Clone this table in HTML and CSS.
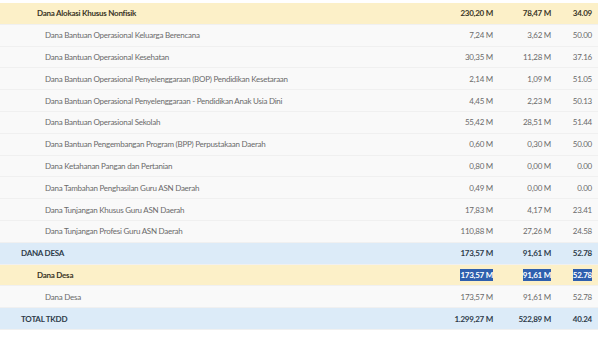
FILE: index.html
```html
<!DOCTYPE html>
<html lang="en">
<head>
    <meta charset="UTF-8">
    <title>Realisasi TKDD</title>
    <link rel="stylesheet" href="styles.css">
</head>
<body>
    <!-- TKDD realisation table -->
    <div class="tkdd-table">
        <div class="row sub-group">
            <div class="cell label lvl-2">Dana Alokasi Khusus Nonfisik</div>
            <div class="cell num">230,20 M</div>
            <div class="cell num">78,47 M</div>
            <div class="cell num">34.09</div>
        </div>
        <div class="row">
            <div class="cell label lvl-3">Dana Bantuan Operasional Keluarga Berencana</div>
            <div class="cell num">7,24 M</div>
            <div class="cell num">3,62 M</div>
            <div class="cell num">50.00</div>
        </div>
        <div class="row">
            <div class="cell label lvl-3">Dana Bantuan Operasional Kesehatan</div>
            <div class="cell num">30,35 M</div>
            <div class="cell num">11,28 M</div>
            <div class="cell num">37.16</div>
        </div>
        <div class="row">
            <div class="cell label lvl-3">Dana Bantuan Operasional Penyelenggaraan (BOP) Pendidikan Kesetaraan</div>
            <div class="cell num">2,14 M</div>
            <div class="cell num">1,09 M</div>
            <div class="cell num">51.05</div>
        </div>
        <div class="row">
            <div class="cell label lvl-3">Dana Bantuan Operasional Penyelenggaraan - Pendidikan Anak Usia Dini</div>
            <div class="cell num">4,45 M</div>
            <div class="cell num">2,23 M</div>
            <div class="cell num">50.13</div>
        </div>
        <div class="row">
            <div class="cell label lvl-3">Dana Bantuan Operasional Sekolah</div>
            <div class="cell num">55,42 M</div>
            <div class="cell num">28,51 M</div>
            <div class="cell num">51.44</div>
        </div>
        <div class="row">
            <div class="cell label lvl-3">Dana Bantuan Pengembangan Program (BPP) Perpustakaan Daerah</div>
            <div class="cell num">0,60 M</div>
            <div class="cell num">0,30 M</div>
            <div class="cell num">50.00</div>
        </div>
        <div class="row">
            <div class="cell label lvl-3">Dana Ketahanan Pangan dan Pertanian</div>
            <div class="cell num">0,80 M</div>
            <div class="cell num">0,00 M</div>
            <div class="cell num">0.00</div>
        </div>
        <div class="row">
            <div class="cell label lvl-3">Dana Tambahan Penghasilan Guru ASN Daerah</div>
            <div class="cell num">0,49 M</div>
            <div class="cell num">0,00 M</div>
            <div class="cell num">0.00</div>
        </div>
        <div class="row">
            <div class="cell label lvl-3">Dana Tunjangan Khusus Guru ASN Daerah</div>
            <div class="cell num">17,83 M</div>
            <div class="cell num">4,17 M</div>
            <div class="cell num">23.41</div>
        </div>
        <div class="row">
            <div class="cell label lvl-3">Dana Tunjangan Profesi Guru ASN Daerah</div>
            <div class="cell num">110,88 M</div>
            <div class="cell num">27,26 M</div>
            <div class="cell num">24.58</div>
        </div>
        <div class="row group">
            <div class="cell label lvl-1">DANA DESA</div>
            <div class="cell num">173,57 M</div>
            <div class="cell num">91,61 M</div>
            <div class="cell num">52.78</div>
        </div>
        <div class="row sub-group">
            <div class="cell label lvl-2">Dana Desa</div>
            <div class="cell num"><span class="selected">173,57 M</span></div>
            <div class="cell num"><span class="selected">91,61 M</span></div>
            <div class="cell num"><span class="selected">52.78</span></div>
        </div>
        <div class="row">
            <div class="cell label lvl-3">Dana Desa</div>
            <div class="cell num">173,57 M</div>
            <div class="cell num">91,61 M</div>
            <div class="cell num">52.78</div>
        </div>
        <div class="row group">
            <div class="cell label lvl-1">TOTAL TKDD</div>
            <div class="cell num">1.299,27 M</div>
            <div class="cell num">522,89 M</div>
            <div class="cell num">40.24</div>
        </div>
    </div>
</body>
</html>
```

FILE: styles.css
```css
body {
    margin: 0;
    padding: 3px 0 0 0;
    background-color: #FFFFFF;
    font-family: Lato, "Liberation Sans", sans-serif;
    font-size: 8px;
    letter-spacing: -0.25px;
    color: #6A6A6A;
}

.tkdd-table {
    width: 598px;
}

.row {
    display: grid;
    grid-template-columns: 1fr 80px 58px 41px;
    height: 21.8px;
    align-items: center;
    background-color: #F9F9F9;
    border-bottom: 1px solid #F0F0F0;
    box-sizing: border-box;
}

.row.group {
    background-color: #DCEBF8; /* light blue */
    font-weight: bold;
    color: #2E3B4A;
}

.row.sub-group {
    background-color: #FCF0C8; /* light yellow */
    font-weight: bold;
    color: #3A3526;
}

.cell {
    white-space: nowrap;
}

.label.lvl-1 {
    padding-left: 21px;
}

.label.lvl-2 {
    padding-left: 37px;
}

.label.lvl-3 {
    padding-left: 45px;
}

.num {
    text-align: right;
    padding-right: 6px;
}

.selected {
    background-color: #2F5FAE;
    color: #FFFFFF;
    padding: 1px 0;
}
```
